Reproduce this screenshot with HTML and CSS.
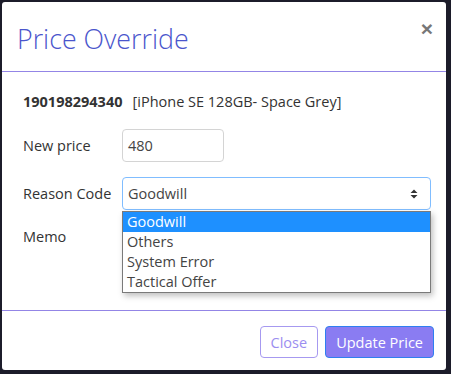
FILE: index.html
```html
<!DOCTYPE html>
<html>
<head>
<meta charset="utf-8">
<link rel="stylesheet" href="styles.css">
</head>
<body>
<div class="modal">
  <div class="modal-header">
    <h4 class="modal-title">Price Override</h4>
    <span class="close">&times;</span>
  </div>
  <div class="modal-body">
    <div class="product"><b>190198294340</b><span class="desc">[iPhone SE 128GB- Space Grey]</span></div>
    <div class="row">
      <label class="lbl">New price</label>
      <div class="input price">480</div>
    </div>
    <div class="row">
      <label class="lbl">Reason Code</label>
      <div class="select-wrap">
        <div class="input select">Goodwill
          <svg class="arrows" width="8" height="10" viewBox="0 0 8 10"><path d="M4 0.5 L7.5 4 H0.5 Z M4 9.5 L7.5 6 H0.5 Z" fill="#333"/></svg>
        </div>
        <ul class="dropdown">
          <li class="sel">Goodwill</li>
          <li>Others</li>
          <li>System Error</li>
          <li>Tactical Offer</li>
        </ul>
      </div>
    </div>
    <div class="row memo">
      <label class="lbl">Memo</label>
      <div class="input textarea"></div>
    </div>
  </div>
  <div class="modal-footer">
    <button class="btn btn-outline">Close</button>
    <button class="btn btn-primary">Update Price</button>
  </div>
</div>
</body>
</html>
```
FILE: styles.css
```css
html, body { margin: 0; padding: 0; }
body {
  width: 451px; height: 374px;
  background: #1c1c2a;
  font-family: "Open Sans", "Liberation Sans", sans-serif;
  font-size: 14.5px;
  color: #333;
  overflow: hidden;
  padding: 2px 5px 0 2px;
  box-sizing: border-box;
}
.modal {
  background: #fff;
  width: 444px;
  height: 368px;
  border-radius: 3px;
  display: flex;
  flex-direction: column;
}
.modal-header {
  height: 69px;
  border-bottom: 1px solid #9385e6;
  display: flex;
  align-items: flex-start;
  justify-content: space-between;
  padding: 0 13px 0 15px;
  box-sizing: content-box;
}
.modal-title {
  margin: 19px 0 0 0;
  font-size: 26.8px;
  font-weight: 300;
  line-height: 36px;
  color: #4a55cc;
}
.close {
  font-size: 21px;
  line-height: 21px;
  color: #777;
  font-weight: 700;
  margin-top: 16px;
  font-family: "Liberation Sans", sans-serif;
}
.modal-body {
  flex: 1;
  padding: 20px 15px 0 21px;
}
.product { line-height: 20px; height: 20px; }
.product b { font-weight: 700; }
.desc { margin-left: 10px; }
.row { display: flex; align-items: center; margin-top: 15px; }
.row:nth-child(2) { margin-top: 17px; }
.lbl { width: 99px; flex: none; }
.input {
  border: 1px solid #d4d4d4;
  border-radius: 4px;
  height: 31px;
  box-sizing: content-box;
  line-height: 31px;
  padding: 0 5px;
  color: #444;
}
.price { width: 90px; }
.select-wrap { position: relative; width: 309px; }
.select {
  border-color: #80bdff;
  padding: 0 12px 0 5px;
  display: flex;
  justify-content: space-between;
  align-items: center;
  color: #444;
}
.arrows { margin-top: 1px; }
.dropdown {
  position: absolute;
  left: 0; top: 34px;
  width: 307px;
  margin: 0; padding: 0;
  list-style: none;
  border: 1px solid #7a7a7a;
  background: #fff;
  box-shadow: 2px 3px 6px rgba(0,0,0,0.25);
  z-index: 2;
}
.dropdown li {
  height: 20px;
  line-height: 20px;
  padding: 0 4px;
  color: #444;
}
.dropdown li.sel { background: #1e90ff; color: #fff; }
.memo { align-items: flex-start; }
.memo .lbl { margin-top: 2px; }
.textarea { width: 297px; height: 60px; }
.modal-footer {
  border-top: 1px solid #9385e6;
  height: 60px;
  display: flex;
  justify-content: flex-end;
  align-items: flex-start;
  padding: 15px 12px 0 0;
  box-sizing: border-box;
  gap: 7px;
}
.btn {
  font-family: "Open Sans", "Liberation Sans", sans-serif;
  font-size: 14.5px;
  height: 32px;
  border-radius: 4px;
  padding: 0 10px;
  cursor: pointer;
}
.btn-outline {
  background: #fff;
  border: 1px solid #a699f0;
  color: #9b8ef0;
}
.btn-primary {
  background: #8a7cf2;
  border: 1px solid #2f7ff0;
  color: #fff;
}
```
